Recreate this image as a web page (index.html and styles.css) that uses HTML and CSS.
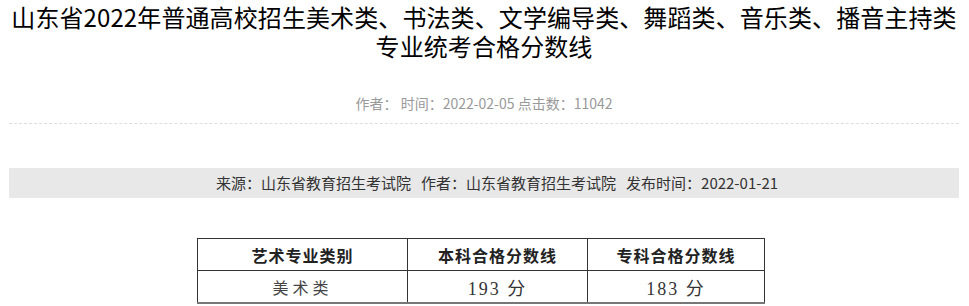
FILE: index.html
```html
<!DOCTYPE html>
<html lang="zh-CN">
<head>
<meta charset="utf-8">
<title>山东省2022年普通高校招生艺术类专业统考合格分数线</title>
<link rel="stylesheet" href="styles.css">
</head>
<body>
<div class="page">
  <h1 class="title">山东省2022年普通高校招生美术类、书法类、文学编导类、舞蹈类、音乐类、播音主持类专业统考合格分数线</h1>
  <div class="meta">作者： 时间：2022-02-05 点击数：11042</div>
  <div class="source">来源：山东省教育招生考试院&nbsp;&nbsp;&nbsp;作者：山东省教育招生考试院&nbsp;&nbsp;&nbsp;发布时间：2022-01-21</div>
  <div class="content">
    <table class="scores">
      <colgroup>
        <col class="c1"><col class="c2"><col class="c3">
      </colgroup>
      <thead>
        <tr><th>艺术专业类别</th><th>本科合格分数线</th><th>专科合格分数线</th></tr>
      </thead>
      <tbody>
        <tr><td class="name">美术类</td><td>193 分</td><td>183 分</td></tr>
      </tbody>
    </table>
  </div>
</div>
</body>
</html>
```
FILE: styles.css
```css
html, body {
  margin: 0;
  padding: 0;
  background: #fff;
}
body {
  font-family: "Noto Sans CJK SC", "Noto Sans", sans-serif;
  color: #000;
}
.page {
  margin: 0 10px 0 9px;
}
.title {
  margin: 0;
  padding-top: 2px;
  font-size: 24px;
  font-weight: normal;
  line-height: 29px;
  text-align: center;
  color: #000;
  letter-spacing: 0.1px;
}
.meta {
  margin-top: 33px;
  padding-bottom: 10px;
  font-size: 14px;
  line-height: 20px;
  color: #999;
  text-align: center;
  border-bottom: 1px dashed #ddd;
}
.source {
  margin-top: 44px;
  height: 30px;
  line-height: 30px;
  padding-left: 26px;
  background: #e8e8e8;
  font-size: 15px;
  color: #333;
  text-align: center;
}
.content {
  padding-top: 40px;
  padding-left: 188px;
}
.scores {
  border-collapse: collapse;
  width: 567px;
  table-layout: fixed;
  font-family: "Liberation Serif", "Noto Sans CJK SC", serif;
}
.c1 { width: 210px; }
.c2 { width: 180px; }
.c3 { width: 177px; }
.scores th,
.scores td {
  border: 1px solid #333;
  height: 31px;
  padding: 0;
  text-align: center;
  vertical-align: middle;
}
.scores th {
  font-family: "Noto Sans CJK SC", serif;
  font-size: 16px;
  font-weight: bold;
  color: #222;
  letter-spacing: 1px;
}
.scores td {
  font-size: 18px;
  color: #333;
  letter-spacing: 2px;
}
.scores td.name {
  font-family: "Noto Sans CJK SC", serif;
  font-size: 16px;
  letter-spacing: 4px;
  color: #444;
}
.scores tbody tr:last-child td {
  border-bottom: 2px solid #777;
}
```
